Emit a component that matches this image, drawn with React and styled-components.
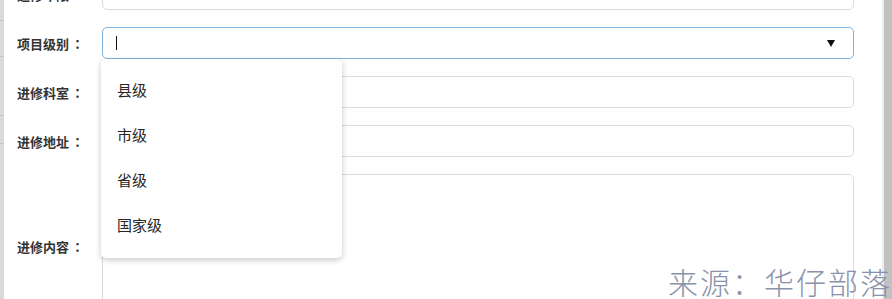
import React from 'react'
import styled, { createGlobalStyle } from 'styled-components'

const GlobalStyle = createGlobalStyle`
  html, body {
    margin: 0;
    padding: 0;
    background: #fff;
  }
  body {
    font-family: "Noto Sans CJK SC", "Liberation Sans", sans-serif;
  }
`

const fields = [
  { label: '进修年限' },
  { label: '项目级别', select: true },
  { label: '进修科室' },
  { label: '进修地址' },
  { label: '进修内容', area: true },
]

const levels = ['县级', '市级', '省级', '国家级']

const App = () => {
  return (
    <Page>
      <GlobalStyle />
      <LeftStrip>
        <StripCell $h={20} />
        <StripCell $h={35} />
        <StripCell $h={58} />
        <StripCell $h={27} />
      </LeftStrip>
      <Panel>
        <Form>
          {fields.map((f) => (
            <Row key={f.label}>
              <Label>
                {f.label}
                <Colon>：</Colon>
              </Label>
              {f.area ? (
                <TextArea />
              ) : f.select ? (
                <SelectBox>
                  <Caret />
                  <Arrow />
                  <Menu>
                    {levels.map((l) => (
                      <MenuItem key={l}>{l}</MenuItem>
                    ))}
                  </Menu>
                </SelectBox>
              ) : (
                <Input />
              )}
            </Row>
          ))}
        </Form>
      </Panel>
      <ScrollGap />
      <Scrollbar />
      <Watermark>来源：华仔部落</Watermark>
    </Page>
  )
}

export default App

const Page = styled.div`
  position: relative;
  display: flex;
  width: 892px;
  height: 299px;
  overflow: hidden;
`

const LeftStrip = styled.div`
  width: 4px;
  flex-shrink: 0;
  background: #dadada;
  display: flex;
  flex-direction: column;
`

const StripCell = styled.div`
  height: ${(p) => p.$h}px;
  border-bottom: 1px solid #c4c4c4;
`

const Panel = styled.div`
  flex: 1;
  background: #fff;
  padding: 0 28px 0 13px;
`

const Form = styled.div`
  margin-top: -22px;
  display: flex;
  flex-direction: column;
  gap: 17px;
`

const Row = styled.div`
  display: flex;
  align-items: center;
`

const Label = styled.div`
  width: 85px;
  flex-shrink: 0;
  font-size: 13px;
  font-weight: 700;
  color: #333;
  white-space: nowrap;
`

const Colon = styled.span`
  font-family: "Noto Sans CJK TC", "Noto Sans CJK SC", sans-serif;
  margin-left: 2px;
`

const fieldBase = `
  flex: 1;
  box-sizing: border-box;
  height: 32px;
  border: 1px solid #dcdcdc;
  border-radius: 5px;
  background: #fff;
`

const Input = styled.div`
  ${fieldBase}
`

const TextArea = styled.div`
  ${fieldBase}
  height: 145px;
`

const SelectBox = styled.div`
  ${fieldBase}
  position: relative;
  border-color: #7fb3dc;
  display: flex;
  align-items: center;
  justify-content: space-between;
  padding: 0 18px 0 13px;
`

const Caret = styled.span`
  width: 1px;
  height: 14px;
  background: #111;
`

const Arrow = styled.span`
  width: 0;
  height: 0;
  border-left: 4.5px solid transparent;
  border-right: 4.5px solid transparent;
  border-top: 7px solid #111;
`

const Menu = styled.div`
  position: absolute;
  top: 31px;
  left: -2px;
  width: 241px;
  box-sizing: border-box;
  padding: 8px 0 11px;
  background: #fff;
  border-radius: 5px;
  box-shadow: 0 2px 6px rgba(0, 0, 0, 0.22);
  z-index: 2;
`

const MenuItem = styled.div`
  height: 45px;
  line-height: 45px;
  padding-left: 16px;
  font-size: 15px;
  color: #262626;
`

const ScrollGap = styled.div`
  width: 2px;
  flex-shrink: 0;
  background: #ececec;
`

const Scrollbar = styled.div`
  width: 8px;
  flex-shrink: 0;
  background: #c1c1c1;
`

const Watermark = styled.div`
  position: absolute;
  right: 0;
  bottom: -4px;
  font-size: 30px;
  letter-spacing: 2px;
  font-weight: 300;
  color: #8a92ab;
  white-space: nowrap;
  z-index: 3;
`
